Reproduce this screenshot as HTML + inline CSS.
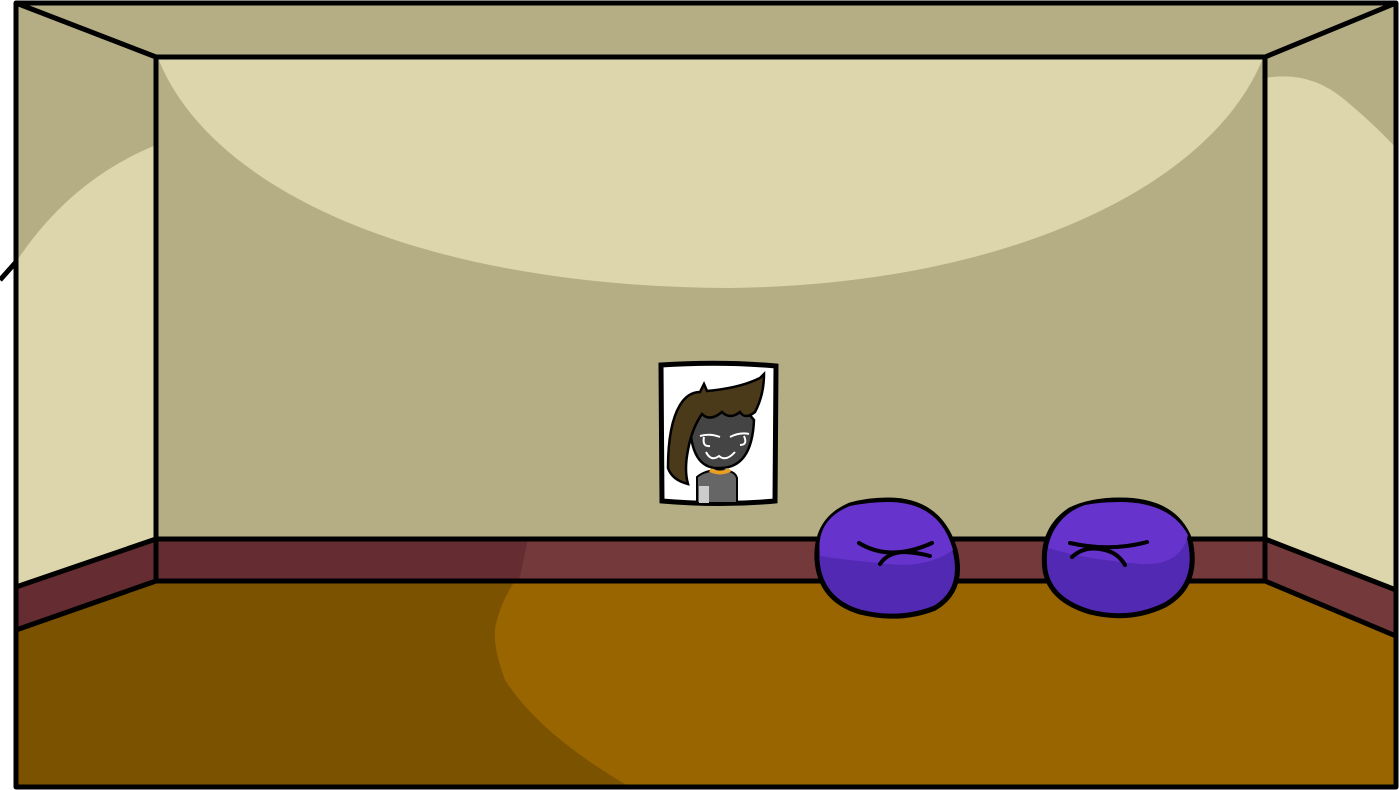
<!DOCTYPE html>
<html><head><meta charset="utf-8"><style>html,body{margin:0;padding:0;background:#fff;overflow:hidden}svg{display:block}</style></head>
<body>
<svg width="1399" height="790" viewBox="0 0 1399 790" xmlns="http://www.w3.org/2000/svg">
<polygon points="16,3 1396,3 1265,57 156,57" fill="#b5ae85"/>
<rect x="156" y="57" width="1109" height="482" fill="#b5ae85"/>
<path d="M158,58 C210,190 420,287 730,288 C1000,285 1210,190 1263,58 Z" fill="#ddd6ac"/>
<polygon points="16,3 156,57 156,539 16,587" fill="#b5ae85"/>
<path d="M16,262 Q70,180 156,145 L156,539 L16,587 Z" fill="#ddd6ac"/>
<polygon points="16,587 156,539 156,581 16,630" fill="#652d32"/>
<polygon points="1396,3 1265,57 1265,539 1396,590" fill="#b5ae85"/>
<path d="M1265,78 Q1310,70 1345,100 Q1375,125 1396,148 L1396,590 L1265,539 Z" fill="#ddd6ac"/>
<polygon points="1265,539 1396,590 1396,636 1265,581" fill="#74393a"/>
<rect x="156" y="539" width="1109" height="42" fill="#74393a"/>
<polygon points="156,539 528,539 519,581 156,581" fill="#652d32"/>
<polygon points="156,581 1265,581 1396,636 1396,787 16,787 16,630" fill="#7b5200"/>
<path d="M515,581 L1265,581 L1396,636 L1396,787 L630,787 Q540,735 505,680 Q490,640 497,620 Q502,600 515,581 Z" fill="#996500"/>
<g stroke="#000" stroke-width="5" fill="none" stroke-linejoin="round">
<rect x="16" y="3" width="1380" height="784"/>
<rect x="156" y="57" width="1109" height="524"/>
<line x1="16" y1="3" x2="156" y2="57"/>
<line x1="1396" y1="3" x2="1265" y2="57"/>
<line x1="156" y1="539" x2="1265" y2="539"/>
<line x1="156" y1="539" x2="16" y2="587"/>
<line x1="156" y1="581" x2="16" y2="630"/>
<line x1="1265" y1="539" x2="1396" y2="590"/>
<line x1="1265" y1="581" x2="1396" y2="636"/>
<line x1="0" y1="280" x2="16" y2="262"/>
</g>
<!-- poster -->
<path d="M661,365 Q720,361 776,366 L775,501 Q720,506 662,501 Z" fill="#fff" stroke="#000" stroke-width="5"/>
<path d="M697,503 L697,477 Q705,470 720,470 Q735,470 737,478 L737,503 Z" fill="#666" stroke="#000" stroke-width="2"/>
<rect x="699" y="486" width="10" height="17" fill="#ccc"/>
<path d="M710,470 Q720,475 730,470" stroke="#e8a020" stroke-width="4" fill="none"/>
<path d="M690,420 Q690,470 720,468 Q752,468 754,420 Q740,402 720,402 Q695,405 690,420 Z" fill="#444" stroke="#000" stroke-width="2.5"/>
<path d="M668,468 Q668,425 680,405 Q688,392 700,392 L704,384 L707,391 Q740,388 760,378 L764,374 Q764,395 755,412 Q745,420 740,412 Q730,420 722,412 Q710,422 702,414 Q692,428 688,450 Q684,470 688,484 Q672,480 668,468 Z" fill="#4a3a1a" stroke="#000" stroke-width="2.5"/>
<g stroke="#fff" stroke-width="2" fill="none">
<path d="M700,436 Q710,433 720,437 M704,437 Q702,447 710,446"/>
<path d="M730,437 Q740,432 749,434 M744,436 Q748,445 740,445"/>
<path d="M706,452 Q711,462 719,456 Q726,462 735,452"/>
</g>
<!-- beanbags -->
<g stroke="#000" stroke-width="5">
<path d="M888,500 Q940,500 955,550 Q965,590 935,608 Q900,622 860,612 Q820,600 817,560 Q815,520 850,505 Q868,500 888,500 Z" fill="#5229b3"/>
<path d="M1120,500 Q1175,500 1190,540 Q1200,585 1165,605 Q1130,622 1090,612 Q1050,600 1045,570 Q1040,530 1070,510 Q1090,500 1120,500 Z" fill="#5229b3"/>
</g>
<path d="M820,556 Q815,520 850,506 Q870,502 888,502 Q940,502 953,550 Q925,570 880,563 Q845,560 820,556 Z" fill="#6633cc"/>
<path d="M1048,548 Q1055,515 1085,505 Q1100,502 1120,502 Q1170,502 1188,535 Q1180,570 1130,563 Q1080,558 1048,548 Z" fill="#6633cc"/>
<g stroke="#000" stroke-width="4" fill="none" stroke-linecap="round">
<path d="M859,543 Q890,562 932,543 M880,564 Q888,552 905,552 Q920,553 930,556"/>
<path d="M1070,543 Q1110,552 1147,542 M1072,557 Q1085,545 1105,550 Q1118,553 1125,565"/>
</g>
</svg>
</body></html>
